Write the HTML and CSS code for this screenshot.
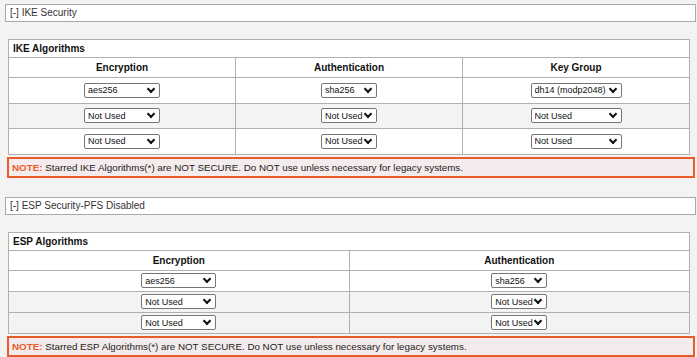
FILE: index.html
```html
<!DOCTYPE html>
<html lang="en">
<head>
<meta charset="UTF-8">
<title>IPsec Security</title>
<link rel="stylesheet" href="styles.css">
</head>
<body>
<div class="sectionBar">[-] IKE Security</div>
<table class="algTable ike">
    <tr class="titleRow"><td colspan="3">IKE Algorithms</td></tr>
    <tr class="headRow"><th>Encryption</th><th>Authentication</th><th>Key Group</th></tr>
    <tr class="dataRow">
        <td><span class="selWrap"><select class="selEnc"><option>aes256</option></select></span></td>
        <td><span class="selWrap"><select class="selAuth"><option>sha256</option></select></span></td>
        <td><span class="selWrap"><select class="selGroup"><option>dh14 (modp2048)</option></select></span></td>
    </tr>
    <tr class="dataRow alt">
        <td><span class="selWrap"><select class="selEnc"><option>Not Used</option></select></span></td>
        <td><span class="selWrap"><select class="selAuth"><option>Not Used</option></select></span></td>
        <td><span class="selWrap"><select class="selGroup"><option>Not Used</option></select></span></td>
    </tr>
    <tr class="dataRow">
        <td><span class="selWrap"><select class="selEnc"><option>Not Used</option></select></span></td>
        <td><span class="selWrap"><select class="selAuth"><option>Not Used</option></select></span></td>
        <td><span class="selWrap"><select class="selGroup"><option>Not Used</option></select></span></td>
    </tr>
</table>
<div class="noteBox"><span class="noteLabel">NOTE:</span> Starred IKE Algorithms(*) are NOT SECURE. Do NOT use unless necessary for legacy systems.</div>

<div class="sectionBar esp">[-] ESP Security-PFS Disabled</div>
<table class="algTable espTable">
    <tr class="titleRow"><td colspan="2">ESP Algorithms</td></tr>
    <tr class="headRow"><th>Encryption</th><th>Authentication</th></tr>
    <tr class="dataRow">
        <td><span class="selWrap"><select class="selEnc2"><option>aes256</option></select></span></td>
        <td><span class="selWrap"><select class="selAuth"><option>sha256</option></select></span></td>
    </tr>
    <tr class="dataRow alt">
        <td><span class="selWrap"><select class="selEnc2"><option>Not Used</option></select></span></td>
        <td><span class="selWrap"><select class="selAuth"><option>Not Used</option></select></span></td>
    </tr>
    <tr class="dataRow alt">
        <td><span class="selWrap"><select class="selEnc2"><option>Not Used</option></select></span></td>
        <td><span class="selWrap"><select class="selAuth"><option>Not Used</option></select></span></td>
    </tr>
</table>
<div class="noteBox"><span class="noteLabel">NOTE:</span> Starred ESP Algorithms(*) are NOT SECURE. Do NOT use unless necessary for legacy systems.</div>
</body>
</html>
```

FILE: styles.css
```css
body {
    font-family: "Liberation Sans", Arial, sans-serif;
    font-size: 10px;
    color: #222;
    background-color: #f3f3f3;
    margin: 0;
    padding: 4px 0 0 0;
}
.sectionBar {
    margin-left: 5px;
    width: 685px;
    height: 16px;
    line-height: 16px;
    padding-left: 4px;
    background-color: #fff;
    border: 1px solid #a8a8a8;
    color: #333;
}
.sectionBar.esp {
    margin-top: 19px;
}
.algTable {
    margin: 17px 0 0 8px;
    width: 682px;
    border-collapse: collapse;
    background-color: #fff;
    border: 1px solid #a0a0a0;
    table-layout: fixed;
}
.algTable td,
.algTable th {
    border: 1px solid #b0b0b0;
    padding: 0;
    text-align: center;
}
.titleRow td {
    height: 17px;
    text-align: left;
    padding-left: 4px;
    font-weight: bold;
    color: #111;
}
.headRow th {
    height: 19px;
    font-weight: bold;
    color: #111;
}
.ike .dataRow td {
    height: 24.5px;
}
.espTable .dataRow td {
    height: 20px;
}
.dataRow.alt td {
    background-color: #f3f3f3;
}
.selWrap {
    position: relative;
    display: inline-block;
    vertical-align: middle;
    line-height: 0;
}
/* chevron drawn over the right end of the select */
.selWrap::after {
    content: "";
    position: absolute;
    right: 6px;
    top: 3px;
    width: 4px;
    height: 4px;
    border-right: 2px solid #111;
    border-bottom: 2px solid #111;
    transform: rotate(45deg);
    pointer-events: none;
}
.algTable select {
    -webkit-appearance: none;
    appearance: none;
    font-family: "Liberation Sans", Arial, sans-serif;
    font-size: 9px;
    height: 15px;
    padding: 0 0 0 3px;
    border: 1px solid #767676;
    border-radius: 2px;
    background-color: #fff;
    color: #111;
    margin: 0;
}
.selEnc {
    width: 76px;
}
.selEnc2 {
    width: 75px;
}
.selAuth {
    width: 56px;
}
.selGroup {
    width: 91px;
}
.noteBox {
    margin: 2px 0 0 7px;
    width: 681px;
    height: 17px;
    line-height: 17px;
    padding-left: 3px;
    border: 2px solid #ea5b2c;
    background-color: #f4ecec;
    color: #222;
    font-size: 9.8px;
}
.noteLabel {
    color: #ea5b2c;
    font-weight: bold;
}
```
